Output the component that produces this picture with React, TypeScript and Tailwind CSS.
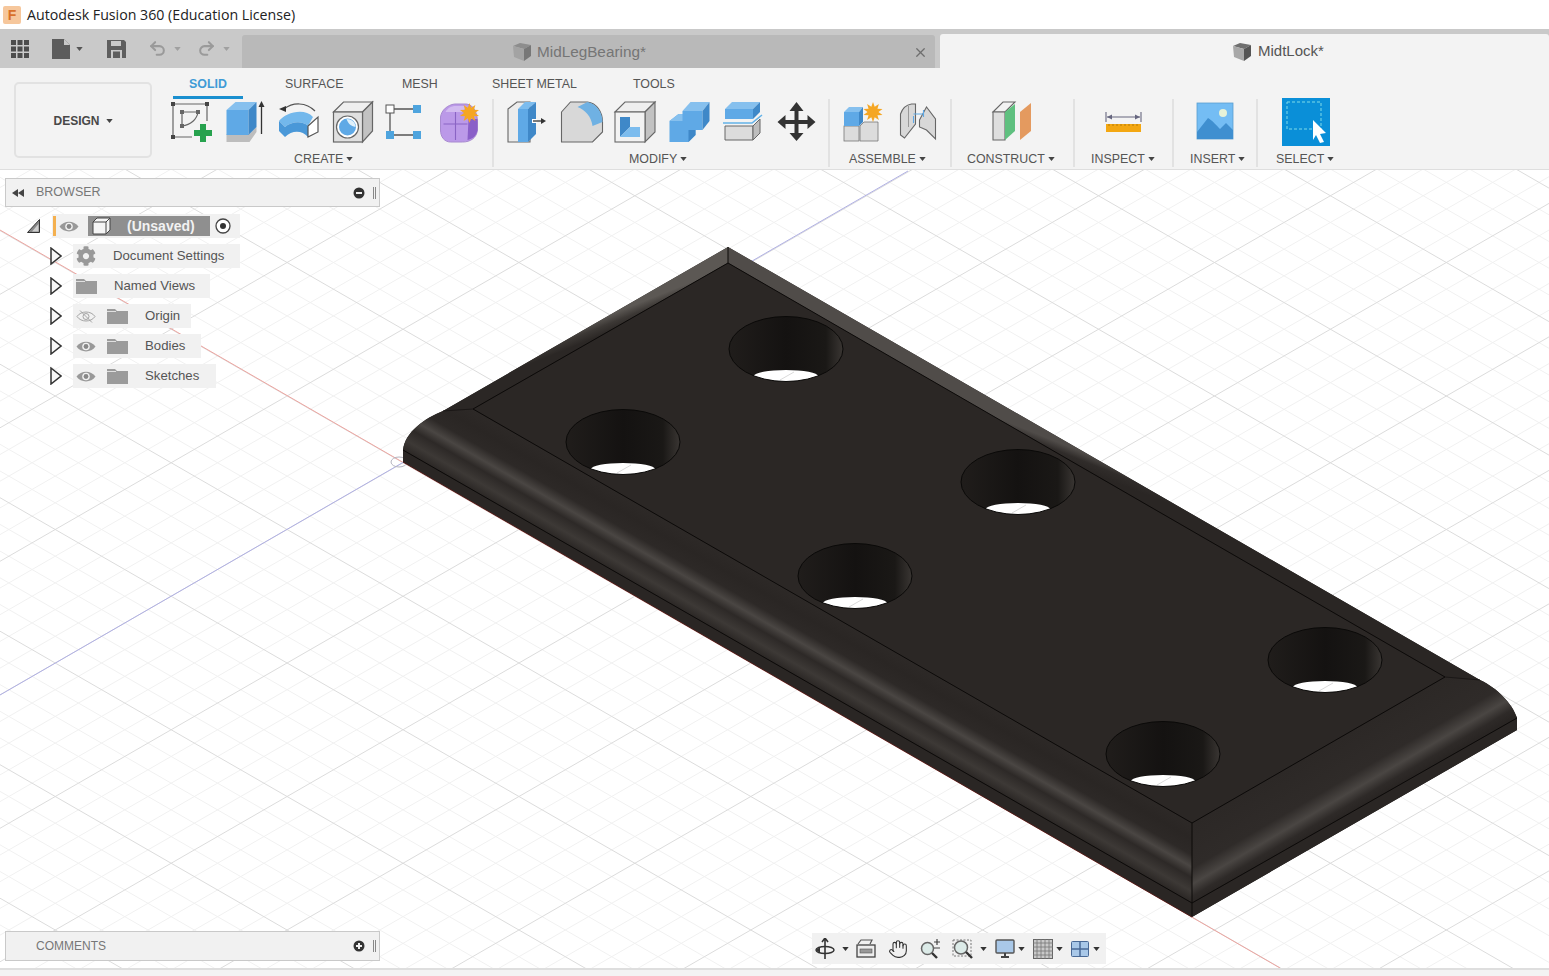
import { Undo2, Redo2, Hand, X } from 'lucide-react';
import { FaCog } from 'react-icons/fa';
import type { ReactNode } from 'react';

const SLOPE = 0.5758;
const STEP = 26.7;

const HOLES = [
  [786, 349],
  [623, 442],
  [1018, 482],
  [855, 576],
  [1325, 660],
  [1163, 754],
];

const Caret = ({ color = '#444' }: { color?: string }) => (
  <svg width="7" height="4" viewBox="0 0 8 5" className="shrink-0">
    <path d="M0 0h8L4 5z" fill={color} />
  </svg>
);

// ribbon icons are drawn in screen coordinates, the viewBox only shifts them
const Ico = ({ x, children }: { x: number; children: ReactNode }) => (
  <svg width="40" height="46" viewBox={`${x} 100 40 46`} className="shrink-0 overflow-visible">
    {children}
  </svg>
);

const SketchIcon = () => (
  <Ico x={172}>
    <path d="M173 105H207M173 105V138M207 105V122M173 138H192" stroke="#666" strokeWidth="1.2" fill="none" />
    <rect x="171" y="103" width="4" height="4" fill="#444" />
    <rect x="205" y="103" width="4" height="4" fill="#444" />
    <rect x="171" y="136" width="4" height="4" fill="#444" />
    <path d="M182 113H198M182 113V127M198 113C197 120 191 126 182 127" stroke="#666" strokeWidth="1.2" fill="none" />
    <rect x="180" y="111" width="4" height="4" fill="#666" />
    <rect x="196" y="111" width="4" height="4" fill="#666" />
    <rect x="180" y="125" width="4" height="4" fill="#666" />
    <path d="M200 125h6v6h6v6h-6v6h-6v-6h-6v-6h6z" fill="#27a24e" />
  </Ico>
);

const ExtrudeIcon = () => (
  <Ico x={225.5}>
    <path d="M226 135L249 135L256 128V133L249 143H226Z" fill="#bdbdbd" />
    <path d="M226 111L235 103H256L248 111Z" fill="#86c0ee" />
    <rect x="226" y="111" width="22" height="25" fill="#5fa9e6" />
    <path d="M248 111L256 103V128L248 136Z" fill="#3f88c8" />
    <path d="M261 135V106" stroke="#333" strokeWidth="1.3" />
    <path d="M258 108L261 102L264 108Z" fill="#333" />
  </Ico>
);

const RevolveIcon = () => (
  <Ico x={279}>
    <path d="M284 110C293 103 306 103 315 112" stroke="#555" strokeWidth="1.2" fill="none" />
    <path d="M279 110L286 107V113Z" fill="#333" />
    <path d="M279 122C285 114 304 108 313 118L308 127C303 122 292 122 285 128Z" fill="#73b8ec" />
    <path d="M279 122L285 128C292 122 303 122 308 127V138C302 131 292 131 285 138L279 132Z" fill="#4a98d8" />
    <path d="M308 127L318 118V133L308 138Z" fill="#fff" stroke="#555" strokeWidth="1.2" />
  </Ico>
);

const HoleIcon = () => (
  <Ico x={332.5}>
    <path d="M333 113L343 103H372L362 113Z" fill="#efefef" stroke="#666" strokeWidth="1.2" />
    <path d="M362 113L372 103V132L362 143Z" fill="#c2c2c2" stroke="#666" strokeWidth="1.2" />
    <rect x="333" y="113" width="29" height="30" fill="#e0e0e0" stroke="#666" strokeWidth="1.2" />
    <circle cx="347" cy="128" r="11" fill="#fff" stroke="#666" strokeWidth="1.2" />
    <circle cx="347" cy="128" r="8.5" fill="#5fa9e6" />
    <path d="M346 120C348 125 350 127 355 128C355 123 351 120 346 120Z" fill="#dff0fb" />
  </Ico>
);

const NodesIcon = () => (
  <Ico x={386}>
    <path d="M394 110H413M390 114V132M394 136H413" stroke="#555" strokeWidth="1.3" />
    <rect x="386" y="106" width="8" height="8" fill="#fff" stroke="#555" />
    <rect x="413" y="106" width="8" height="8" fill="#4ea4de" />
    <rect x="386" y="132" width="8" height="8" fill="#4ea4de" />
    <rect x="413" y="132" width="8" height="8" fill="#4ea4de" />
  </Ico>
);

const Star = ({ cx, cy, r }: { cx: number; cy: number; r: number }) => {
  const pts = Array.from({ length: 20 }, (_, i) => {
    const a = (i * Math.PI) / 10;
    const d = i % 2 ? r * 0.55 : r;
    return `${cx + d * Math.sin(a)},${cy - d * Math.cos(a)}`;
  }).join(' ');
  return <polygon points={pts} fill="#f5a623" />;
};

const FormIcon = () => (
  <Ico x={439.5}>
    <path d="M440 118C441 111 447 106 454 105H466C474 106 477 115 477 124V131C476 139 470 143 462 143H450C444 143 440 138 440 131Z" fill="#bb99e8" stroke="#a88ad0" strokeWidth="1" />
    <path d="M445 113C447 109 451 107 455 107H466L462 113Z" fill="#d2bbf0" />
    <path d="M468 120H477V131C476 137 472 140 467 141Z" fill="#8a5fc8" />
    <path d="M443 125H467M455 113V141" stroke="#8a64c4" strokeWidth="1.1" />
    <Star cx={469} cy={114} r={10} />
  </Ico>
);

const PressPullIcon = () => (
  <Ico x={507}>
    <path d="M508 110L517 103H530V143H508Z" fill="#ececec" stroke="#666" strokeWidth="1.1" />
    <path d="M518 110L525 103H536L528 110Z" fill="#7cbcee" />
    <rect x="518" y="110" width="10" height="33" fill="#5fa9e6" />
    <path d="M528 110L536 103V135L528 143Z" fill="#3f88c8" />
    <rect x="532" y="120" width="5" height="4" fill="#fff" />
    <path d="M533 122H541" stroke="#333" strokeWidth="1.3" />
    <path d="M541 119L546 122L541 125Z" fill="#333" />
  </Ico>
);

const FilletIcon = () => (
  <Ico x={560.5}>
    <path d="M561 113L570 103H587C596 104 602 113 602 123V133L592 143H561Z" fill="#d8d8d8" stroke="#666" strokeWidth="1.1" />
    <path d="M577 108L587 103C596 105 602 113 602 123L592 127C591 118 585 111 577 108Z" fill="#6fb1e3" />
  </Ico>
);

const ShellIcon = () => (
  <Ico x={614}>
    <path d="M615 113L625 103H655L645 113Z" fill="#efefef" stroke="#666" strokeWidth="1.1" />
    <path d="M645 113L655 103V133L645 143Z" fill="#c2c2c2" stroke="#666" strokeWidth="1.1" />
    <rect x="615" y="113" width="30" height="30" fill="#f2f2f2" stroke="#666" strokeWidth="1.1" />
    <path d="M620 118H630V128L620 138Z" fill="#3f88c8" />
    <path d="M630 128H640V138H620Z" fill="#7cbcee" />
  </Ico>
);

const CombineIcon = () => (
  <Ico x={667.5}>
    <path d="M682 112L690 103H709L702 112Z" fill="#86c0ee" />
    <path d="M682 112H702V131H695V136L688 143H669V122L678 115H682Z" fill="#5fa9e6" />
    <path d="M669 122L678 115H682V122Z" fill="#86c0ee" />
    <path d="M702 112L709 103V122L702 131Z" fill="#3f88c8" />
    <path d="M688 131H695V136L688 143Z" fill="#3f88c8" />
  </Ico>
);

const SplitIcon = () => (
  <Ico x={721}>
    <path d="M725 110L732 103H760L753 110Z" fill="#86c0ee" />
    <path d="M725 110H753V120H725Z" fill="#5fa9e6" />
    <path d="M753 110L760 103V113L753 120Z" fill="#3f88c8" />
    <path d="M723 124H752L762 116" stroke="#63b2e8" strokeWidth="1.6" fill="none" />
    <path d="M725 127H753V141H725Z" fill="#dcdcdc" stroke="#666" />
    <path d="M753 127L760 120V134L753 141Z" fill="#bdbdbd" stroke="#666" />
  </Ico>
);

const MoveIcon = () => (
  <Ico x={774.5}>
    <path
      d="M796 103L803 112H798V121H807V116L815 123L807 130V125H798V134H803L796 142L789 134H794V125H785V130L777 123L785 116V121H794V112H789Z"
      fill="#333"
    />
  </Ico>
);

const NewCompIcon = () => (
  <Ico x={843}>
    <rect x="844" y="127" width="15" height="15" fill="#dcdcdc" stroke="#777" strokeWidth="0.8" />
    <path d="M860 127L864 123H878V142H860Z" fill="#dcdcdc" stroke="#777" strokeWidth="0.8" />
    <path d="M844 113L849 108H863L859 113Z" fill="#86c0ee" />
    <rect x="844" y="113" width="15" height="14" fill="#5fa9e6" />
    <path d="M859 113L863 108V123L859 127Z" fill="#3f88c8" />
    <Star cx={873} cy={113} r={10} />
  </Ico>
);

const JointIcon = () => (
  <Ico x={896.5}>
    <path d="M900 115C902 109 905 106 911 105H915V125L904 139L900 136Z" fill="#d8d8d8" stroke="#666" strokeWidth="1.1" />
    <path d="M908 107V128" stroke="#999" />
    <path d="M919 121L926 108L935 120V140L926 131L919 128Z" fill="#d8d8d8" stroke="#666" strokeWidth="1.1" />
    <path d="M913 117V124M923 111V118M913 115H923" stroke="#5fa9e6" strokeWidth="1.1" fill="none" />
  </Ico>
);

const ConstructIcon = () => (
  <Ico x={993}>
    <path d="M993 113L1003 103H1015L1005 113Z" fill="#f2f2f2" stroke="#666" strokeWidth="1.1" />
    <path d="M993 113H1005V141H993Z" fill="#dedede" stroke="#666" strokeWidth="1.1" />
    <path d="M1005 113L1015 105V132L1005 141Z" fill="#5fc07f" />
    <path d="M1020 113L1031 104V132L1020 141Z" fill="#e49a5f" />
  </Ico>
);

const InspectIcon = () => (
  <Ico x={1104}>
    <path d="M1106 113V123M1141 113V123M1107 118H1140" stroke="#66667f" strokeWidth="1.1" />
    <path d="M1107 118L1112 115.5V120.5ZM1140 118L1135 115.5V120.5Z" fill="#66667f" />
    <rect x="1106" y="125" width="35" height="8" fill="#f3a712" />
    <path d="M1109 125v2M1113 125v2M1117 125v2M1121 125v2M1125 125v2M1129 125v2M1133 125v2M1137 125v2" stroke="#a66f05" strokeWidth="0.8" />
  </Ico>
);

const InsertIcon = () => (
  <Ico x={1196}>
    <rect x="1197" y="104" width="36" height="36" fill="#74bdf4" stroke="#5a9fd0" strokeWidth="0.8" />
    <circle cx="1223" cy="114" r="4" fill="#e6f2d8" />
    <path d="M1197 133L1208 119C1212 121 1217 127 1220 130L1226 124L1233 131V140H1197Z" fill="#3f8fd0" />
  </Ico>
);

const SelectIcon = () => (
  <Ico x={1286}>
    <rect x="1282" y="99" width="48" height="48" fill="#0a8fd8" />
    <rect x="1287" y="103" width="34" height="27" fill="none" stroke="#7fdbe8" strokeWidth="1" strokeDasharray="3 2" />
    <path d="M1313 121L1326 134L1320 135L1324 143L1320 144L1316 136L1313 141Z" fill="#fff" />
  </Ico>
);

const Group = ({
  width,
  label,
  labelLeft,
  icons,
  pad,
  last,
}: {
  width: string;
  label: string;
  labelLeft: string;
  icons: ReactNode;
  pad: string;
  last?: boolean;
}) => (
  <div className={`${width} relative h-[70px] shrink-0`}>
    <div className={`flex gap-[13.5px] ${pad}`}>{icons}</div>
    <div className={`absolute top-[53px] flex items-center gap-[3px] text-[12.4px] leading-[14px] text-[#555] ${labelLeft}`}>
      {label}
      <Caret />
    </div>
    {!last && <div className="absolute right-0 top-0 bottom-[2px] w-[2px] bg-[#e2e2e2]" />}
  </div>
);

const TabCube = ({ dim }: { dim?: boolean }) => (
  <svg width="20" height="20" viewBox="0 0 20 20" className="shrink-0">
    <path d="M1 4L8 1L19 3L12 7Z" fill={dim ? '#8d8d8d' : '#6f6f6f'} />
    <path d="M1 4L12 7V19L2 15Z" fill={dim ? '#a3a3a3' : '#a8a8a8'} />
    <path d="M12 7L19 3V14L12 19Z" fill={dim ? '#777' : '#555'} />
  </svg>
);

const Eye = ({ off }: { off?: boolean }) => (
  <svg width="20" height="13" viewBox="0 0 20 12" className="shrink-0">
    {off ? (
      <>
        <path d="M1 6C5 0 15 0 19 6C15 12 5 12 1 6Z" fill="none" stroke="#a4a4a4" />
        <circle cx="10" cy="6" r="3" fill="none" stroke="#a4a4a4" />
        <path d="M4 0L16 12" stroke="#a4a4a4" />
      </>
    ) : (
      <>
        <path d="M0.500 6C5 -0.500 15 -0.500 19.500 6C15 12.500 5 12.500 0.500 6Z" fill="#999" />
        <circle cx="10" cy="6" r="3.800" fill="#f1f1f1" />
        <circle cx="10" cy="6" r="2.400" fill="#888" />
      </>
    )}
  </svg>
);

const Folder = () => (
  <svg width="21" height="16" viewBox="0 0 21 16" className="shrink-0">
    <path d="M0 1H8L10 3H21V16H0Z" fill="#9b9b9b" />
    <path d="M0 3.5H9" stroke="#f1f1f1" strokeWidth="0.8" />
  </svg>
);

const Chevron = () => (
  <svg width="12" height="18" viewBox="0 0 12 18" className="shrink-0">
    <path d="M1 1L11 9L1 17Z" fill="#f7f7f7" stroke="#333" strokeWidth="1.5" />
  </svg>
);

const TreeRow = ({ width, eye, folder, gear, label }: { width: string; eye?: 'on' | 'off'; folder?: boolean; gear?: boolean; label: string }) => (
  <div className="flex h-[30px] items-center pl-[50px]">
    <Chevron />
    <div className={`${width} ml-[11px] flex h-[24px] items-center bg-[#f1f1f1] pl-[3px] text-[13.2px] text-[#555]`}>
      {eye && <Eye off={eye === 'off'} />}
      {eye && <div className="w-[11px] shrink-0" />}
      {gear && <FaCog className="w-[20px] h-[20px] shrink-0 text-[#999]" />}
      {folder && <Folder />}
      <span className="ml-[17px] whitespace-nowrap">{label}</span>
    </div>
  </div>
);

const Viewport = () => {
  const plus = Array.from({ length: 62 }, (_, i) => 497.7 + (i - 45) * STEP);
  const minus = Array.from({ length: 62 }, (_, i) => 828.3 + (i - 25) * STEP);
  const isMajor = (i: number, off: number) => (i - off) % 5 === 0;
  return (
    <svg width="1549" height="798" viewBox="0 170 1549 798" className="block">
      <defs>
        <linearGradient id="flangeL" gradientUnits="userSpaceOnUse" x1="832" y1="616" x2="797" y2="677">
          <stop offset="0" stopColor="#2d2927" />
          <stop offset="0.2" stopColor="#2a2624" />
          <stop offset="0.4" stopColor="#2d2927" />
          <stop offset="0.55" stopColor="#4a4643" />
          <stop offset="0.68" stopColor="#2d2927" />
          <stop offset="0.85" stopColor="#3d3936" />
          <stop offset="1" stopColor="#2a2624" />
        </linearGradient>
        <linearGradient id="flangeR" gradientUnits="userSpaceOnUse" x1="1300" y1="761" x2="1335" y2="821">
          <stop offset="0" stopColor="#2c2826" />
          <stop offset="0.55" stopColor="#2f2b29" />
          <stop offset="0.75" stopColor="#4a4643" />
          <stop offset="0.9" stopColor="#2e2a28" />
          <stop offset="1" stopColor="#292523" />
        </linearGradient>
        <linearGradient id="bevelL" gradientUnits="userSpaceOnUse" x1="594" y1="321" x2="600" y2="336">
          <stop offset="0" stopColor="#5c5854" />
          <stop offset="0.5" stopColor="#3c3835" />
          <stop offset="1" stopColor="#2b2725" />
        </linearGradient>
        <linearGradient id="bevelR" gradientUnits="userSpaceOnUse" x1="1090" y1="455" x2="1084" y2="470">
          <stop offset="0" stopColor="#504c49" />
          <stop offset="0.5" stopColor="#302c2a" />
          <stop offset="1" stopColor="#2a2624" />
        </linearGradient>
        <linearGradient id="hole" x1="0" y1="0" x2="1" y2="0">
          <stop offset="0" stopColor="#201d1b" />
          <stop offset="0.5" stopColor="#141211" />
          <stop offset="0.85" stopColor="#1a1816" />
          <stop offset="1" stopColor="#3a3633" />
        </linearGradient>
        {HOLES.map(([x, y]) => (
          <clipPath key={x} id={`hole-${x}`}>
            <ellipse cx={x} cy={y} rx="57" ry="32.5" />
          </clipPath>
        ))}
      </defs>
      <rect x="0" y="170" width="1549" height="798" fill="#fff" />
      {plus.map((c, i) =>
        isMajor(i, 45) ? null : (
          <line key={i} x1="0" y1={c} x2="1549" y2={c + 1549 * SLOPE} stroke="#f1f1f1" />
        ),
      )}
      {minus.map((d, i) =>
        isMajor(i, 25) ? null : (
          <line key={i} x1="0" y1={d} x2="1549" y2={d - 1549 * SLOPE} stroke="#f1f1f1" />
        ),
      )}
      {plus.map((c, i) =>
        isMajor(i, 45) ? <line key={i} x1="0" y1={c} x2="1549" y2={c + 1549 * SLOPE} stroke="#dcdcdc" /> : null,
      )}
      {minus.map((d, i) =>
        isMajor(i, 25) ? <line key={i} x1="0" y1={d} x2="1549" y2={d - 1549 * SLOPE} stroke="#dcdcdc" /> : null,
      )}
      <line x1="0" y1="230" x2="1280" y2="968" stroke="#eda5a0" />
      <line x1="0" y1="695" x2="908" y2="171" stroke="#b0b0e4" />
      <ellipse cx="399" cy="462" rx="8" ry="5" fill="none" stroke="#b5b5c0" />

      {/* body */}
      <path
        d="M403 450C405 432 425 418 443 411L728 247L1480 680C1497 688 1512 703 1517 718V730L1192 917L403 462Z"
        fill="#262220"
      />
      <path d="M443 411L728 247V263L473 409Z" fill="url(#bevelL)" />
      <path d="M728 247L1480 680L1445 677L728 263Z" fill="url(#bevelR)" />
      <path d="M728 263L1445 677L1192 823L473 409Z" fill="#2b2725" />
      <path d="M473 409L1192 823V903L403 450C405 432 425 418 443 411Z" fill="url(#flangeL)" />
      <path d="M1192 823L1445 677L1480 680C1497 688 1512 703 1517 718L1192 903Z" fill="url(#flangeR)" />
      <path d="M403 450L1192 903L1517 718V730L1192 917L403 462Z" fill="#2a2624" />
      <path d="M403 450L1192 903L1517 718M473 409L1192 823L1445 677M473 409L728 263L1445 677M1192 823V916M728 247V263" fill="none" stroke="#0c0a09" strokeWidth="1" />
      <path d="M443 411L473 409M1445 677L1480 680" stroke="#1a1716" strokeWidth="1" />
      <path d="M403 462L1192 917" stroke="#4a1f1c" strokeWidth="1" />
      {HOLES.map(([x, y]) => (
        <g key={x}>
          <ellipse cx={x} cy={y} rx="57" ry="32.5" fill="url(#hole)" />
          <g clipPath={`url(#hole-${x})`}>
            <ellipse cx={x} cy={y + 27} rx="32" ry="6" fill="#fff" />
            <line x1={x - 6} y1={y + 31} x2={x + 8} y2={y + 23} stroke="#dadada" />
          </g>
          <ellipse cx={x} cy={y} rx="57" ry="32.5" fill="none" stroke="#0a0908" />
        </g>
      ))}
    </svg>
  );
};

const App = () => (
  <div className="flex h-[976px] w-[1549px] flex-col overflow-hidden bg-white font-['Liberation_Sans',Arial,sans-serif]">
    {/* title bar */}
    <div className="flex h-[29px] shrink-0 items-center bg-white pl-[3px]">
      <div className="flex h-[18px] w-[18px] items-center justify-center rounded-[2px] bg-[#f6c79c] text-[14px] font-bold leading-none text-[#d9702a]">F</div>
      <span className="ml-[6px] font-['Open_Sans',sans-serif] text-[14.2px] text-[#222]">Autodesk Fusion 360 (Education License)</span>
    </div>

    {/* tab strip */}
    <div className="flex h-[39px] shrink-0 items-end bg-[#c9c9c9]">
      <div className="flex h-[39px] w-[242px] shrink-0 items-center">
        <svg width="18" height="18" viewBox="0 0 18 18" className="ml-[11px]">
          <path d="M0 0h5v5H0zM6.500 0h5v5h-5zM13 0h5v5h-5zM0 6.500h5v5H0zM6.500 6.500h5v5h-5zM13 6.500h5v5h-5zM0 13h5v5H0zM6.500 13h5v5h-5zM13 13h5v5h-5z" fill="#4c4c4c" />
        </svg>
        <svg width="18" height="20" viewBox="0 0 18 20" className="ml-[23px]">
          <path d="M0 0H12L18 6V20H0Z" fill="#5c5c5c" />
          <path d="M12 0V6H18Z" fill="#c9c9c9" />
        </svg>
        <div className="ml-[6px]"><Caret color="#555" /></div>
        <svg width="19" height="19" viewBox="0 0 19 19" className="ml-[24px]">
          <path d="M0 1H17L19 3V19H0Z" fill="#5e5e5e" />
          <rect x="4" y="2" width="10" height="5" fill="#c9c9c9" />
          <rect x="4" y="11" width="11" height="8" fill="#c9c9c9" />
          <rect x="6" y="12.500" width="7" height="6.500" fill="#5e5e5e" />
        </svg>
        <Undo2 className="ml-[22px] h-[19px] w-[19px] text-[#9a9a9a]" strokeWidth={2.6} />
        <div className="ml-[7px]"><Caret color="#a0a0a0" /></div>
        <Redo2 className="ml-[16px] h-[19px] w-[19px] text-[#9a9a9a]" strokeWidth={2.6} />
        <div className="ml-[7px]"><Caret color="#a0a0a0" /></div>
      </div>
      <div className="flex h-[33px] w-[693px] shrink-0 items-center rounded-t-[3px] bg-[#b9b9b9] pt-[1px]">
        <div className="ml-[270px]"><TabCube dim /></div>
        <span className="ml-[5px] text-[15.3px] text-[#757575]">MidLegBearing*</span>
        <X className="ml-[267px] h-[15px] w-[15px] text-[#6e6e6e]" strokeWidth={2} />
      </div>
      <div className="ml-[5px] flex h-[34px] flex-1 items-center rounded-t-[3px] bg-[#f3f3f3] pt-[1px]">
        <div className="ml-[292px]"><TabCube /></div>
        <span className="ml-[6px] text-[15px] text-[#555]">MidtLock*</span>
      </div>
    </div>

    {/* ribbon */}
    <div className="flex h-[102px] shrink-0 border-b border-[#dedede] bg-[#f3f3f3]">
      <div className="ml-[14px] mt-[14px] flex h-[76px] w-[138px] shrink-0 items-center justify-center gap-[6px] rounded-[5px] border-2 border-[#e2e2e2] pt-[2px] text-[12px] font-bold text-[#484848]">
        DESIGN
        <Caret />
      </div>
      <div className="flex flex-col">
        <div className="relative h-[32px] w-[1300px] text-[12.4px] text-[#555]">
          <div className="absolute left-[37px] top-[7px] font-bold text-[#3f9bd6]">SOLID</div>
          <div className="absolute left-[21px] top-[28px] h-[3px] w-[70px] bg-[#1a8fcf]" />
          <div className="absolute left-[133px] top-[7px]">SURFACE</div>
          <div className="absolute left-[250px] top-[7px]">MESH</div>
          <div className="absolute left-[340px] top-[7px]">SHEET METAL</div>
          <div className="absolute left-[481px] top-[7px]">TOOLS</div>
        </div>
        <div className="flex">
          <Group
            width="w-[342px]"
            pad="pl-[20px]"
            label="CREATE"
            labelLeft="left-[142px]"
            icons={<><SketchIcon /><ExtrudeIcon /><RevolveIcon /><HoleIcon /><NodesIcon /><FormIcon /></>}
          />
          <Group
            width="w-[336px]"
            pad="pl-[13px]"
            label="MODIFY"
            labelLeft="left-[135px]"
            icons={<><PressPullIcon /><FilletIcon /><ShellIcon /><CombineIcon /><SplitIcon /><MoveIcon /></>}
          />
          <Group
            width="w-[122px]"
            pad="pl-[13px]"
            label="ASSEMBLE"
            labelLeft="left-[19px]"
            icons={<><NewCompIcon /><JointIcon /></>}
          />
          <Group
            width="w-[123px]"
            pad="pl-[41px]"
            label="CONSTRUCT"
            labelLeft="left-[15px]"
            icons={<ConstructIcon />}
          />
          <Group
            width="w-[99px]"
            pad="pl-[29px]"
            label="INSPECT"
            labelLeft="left-[16px]"
            icons={<InspectIcon />}
          />
          <Group
            width="w-[84px]"
            pad="pl-[22px]"
            label="INSERT"
            labelLeft="left-[16px]"
            icons={<InsertIcon />}
          />
          <Group
            width="w-[100px]"
            pad="pl-[28px]"
            label="SELECT"
            labelLeft="left-[18px]"
            last
            icons={<SelectIcon />}
          />
        </div>
      </div>
    </div>

    {/* canvas */}
    <div className="relative h-[798px] shrink-0 overflow-hidden">
      <Viewport />

      <div className="absolute left-[5px] top-[8px] flex h-[29px] w-[375px] items-center border border-[#c9c9c9] bg-[#f1f1f1] text-[12.500px] text-[#777]">
        <svg width="12" height="8" viewBox="0 0 12 8" className="ml-[6px]">
          <path d="M6 0V8L0 4ZM12 0V8L6 4Z" fill="#444" />
        </svg>
        <span className="ml-[12px] flex-1">BROWSER</span>
        <svg width="12" height="12" viewBox="0 0 12 12" className="mr-[8px]">
          <circle cx="6" cy="6" r="5.500" fill="#333" />
          <rect x="3" y="5" width="6" height="2" fill="#f1f1f1" />
        </svg>
        <div className="mr-[3px] h-[12px] w-[3px] border-x border-[#888]" />
      </div>

      <div className="absolute left-0 top-[41px] flex flex-col">
        <div className="flex h-[30px] items-center pl-[27px]">
          <svg width="13" height="14" viewBox="0 0 13 14" className="shrink-0">
            <path d="M0.500 13.500H12.500V0.500Z" fill="#888" stroke="#333" />
            <path d="M5 12.500L11.500 5V12.500Z" fill="#cfcfcf" />
          </svg>
          <div className="ml-[12px] flex h-[24px] w-[188px] items-center bg-[#f1f1f1] pl-[1px]">
            <div className="h-[20px] w-[3px] shrink-0 bg-[#f4b04f]" />
            <div className="ml-[3px]"><Eye /></div>
            <div className="ml-[9px] flex h-[20px] w-[122px] shrink-0 items-center bg-[#8f8f8f]">
              <svg width="20" height="18" viewBox="0 0 20 18" className="ml-[4px] shrink-0">
                <path d="M1 5L5 1H18V13L14 17H1Z" fill="#f5f5f5" stroke="#444" />
                <path d="M14 5V17M14 5L18 1M1 5H14" fill="none" stroke="#444" />
              </svg>
              <span className="ml-[15px] whitespace-nowrap text-[14px] font-bold text-[#f2f2f2]">(Unsaved)</span>
            </div>
            <svg width="16" height="16" viewBox="0 0 16 16" className="ml-[5px] shrink-0">
              <circle cx="8" cy="8" r="7" fill="#fff" stroke="#444" strokeWidth="1.3" />
              <circle cx="8" cy="8" r="3" fill="#333" />
            </svg>
          </div>
        </div>
        <TreeRow width="w-[167px]" gear label="Document Settings" />
        <TreeRow width="w-[137px]" folder label="Named Views" />
        <TreeRow width="w-[118px]" eye="off" folder label="Origin" />
        <TreeRow width="w-[128px]" eye="on" folder label="Bodies" />
        <TreeRow width="w-[143px]" eye="on" folder label="Sketches" />
      </div>

      <div className="absolute left-[5px] top-[761px] flex h-[30px] w-[375px] items-center border border-[#c9c9c9] bg-[#f1f1f1] text-[12px] text-[#777]">
        <span className="ml-[30px] flex-1">COMMENTS</span>
        <svg width="12" height="12" viewBox="0 0 12 12" className="mr-[8px]">
          <circle cx="6" cy="6" r="5.500" fill="#333" />
          <path d="M3 5H5V3H7V5H9V7H7V9H5V7H3Z" fill="#f1f1f1" />
        </svg>
        <div className="mr-[3px] h-[12px] w-[3px] border-x border-[#888]" />
      </div>

      {/* nav bar */}
      <div className="absolute left-[812px] top-[763px] flex h-[31px] w-[294px] items-center bg-[#f1f1f1] pl-[3px]">
        <svg width="20" height="22" viewBox="0 0 20 22" className="shrink-0">
          <path d="M10 1V21M7 4L10 0L13 4" fill="none" stroke="#333" strokeWidth="1.6" />
          <ellipse cx="10" cy="12" rx="9" ry="3.500" fill="none" stroke="#333" strokeWidth="1.5" />
          <path d="M1 12L5 9V15Z" fill="#333" />
        </svg>
        <div className="ml-[7px]"><Caret color="#333" /></div>
        <svg width="20" height="19" viewBox="0 0 20 19" className="ml-[7px] shrink-0">
          <rect x="1" y="6" width="18" height="12" fill="#eee" stroke="#444" strokeWidth="1.3" />
          <rect x="4" y="10" width="12" height="4" fill="#999" stroke="#555" strokeWidth="0.6" />
          <path d="M2 5L5 1H16L14 5" fill="none" stroke="#555" strokeWidth="1.2" />
        </svg>
        <Hand className="ml-[12px] h-[20px] w-[20px] shrink-0 text-[#333]" strokeWidth={1.3} />
        <svg width="21" height="20" viewBox="0 0 21 20" className="ml-[12px] shrink-0">
          <circle cx="7.500" cy="9.500" r="6" fill="#dcebe8" stroke="#666" strokeWidth="1.5" />
          <path d="M12 14L17 19" stroke="#333" strokeWidth="2.400" />
          <path d="M17 0V6M14 3H20M14 9H20" stroke="#444" strokeWidth="1.2" />
        </svg>
        <svg width="22" height="20" viewBox="0 0 22 20" className="ml-[11px] shrink-0">
          <rect x="1" y="1" width="18" height="16" fill="none" stroke="#777" strokeDasharray="2 1.500" />
          <circle cx="9" cy="8.500" r="6.500" fill="#dcebe8" stroke="#666" strokeWidth="1.5" />
          <path d="M14 13L20 19" stroke="#333" strokeWidth="2.400" />
        </svg>
        <div className="ml-[6px]"><Caret color="#333" /></div>
        <svg width="20" height="19" viewBox="0 0 20 19" className="ml-[8px] shrink-0">
          <rect x="1" y="1" width="18" height="13" rx="1" fill="#a9c8e8" stroke="#555" strokeWidth="1.4" />
          <path d="M6 18H14M10 14V18" stroke="#444" strokeWidth="2" />
        </svg>
        <div className="ml-[3px]"><Caret color="#333" /></div>
        <svg width="20" height="20" viewBox="0 0 20 20" className="ml-[8px] shrink-0">
          <rect x="0.500" y="0.500" width="19" height="19" fill="#c9c9c9" stroke="#666" />
          <path d="M4 0V20M8 0V20M12 0V20M16 0V20M0 4H20M0 8H20M0 12H20M0 16H20" stroke="#777" strokeWidth="0.8" />
        </svg>
        <div className="ml-[3px]"><Caret color="#333" /></div>
        <svg width="18" height="16" viewBox="0 0 18 16" className="ml-[8px] shrink-0">
          <rect x="0.500" y="0.500" width="17" height="15" rx="1" fill="#a9c8e8" stroke="#4a6a96" />
          <path d="M9 0V16M0 8H18" stroke="#4a6a96" strokeWidth="1.5" />
        </svg>
        <div className="ml-[4px]"><Caret color="#333" /></div>
      </div>
    </div>

    <div className="h-[8px] shrink-0 border-t-2 border-[#dedede] bg-[#f3f3f3]" />
  </div>
);

export default App;
